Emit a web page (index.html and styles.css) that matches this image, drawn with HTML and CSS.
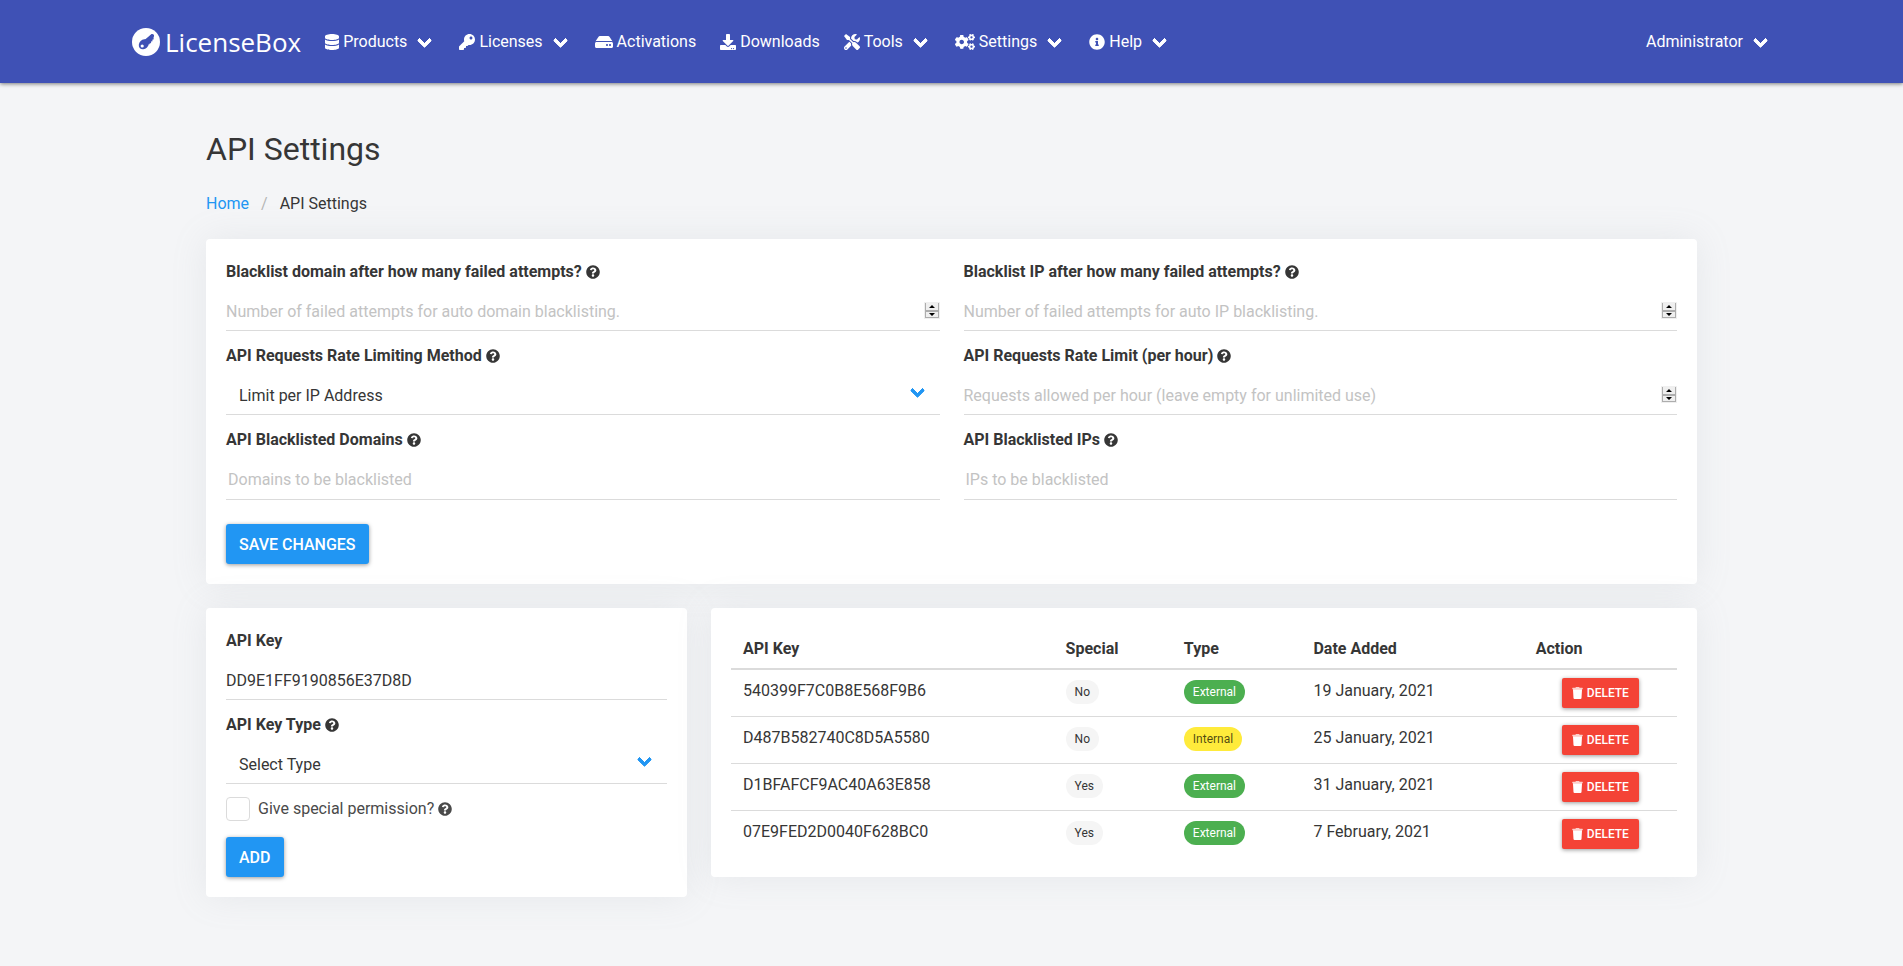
FILE: index.html
```html
<!DOCTYPE html>
<html lang="en">
<head>
<meta charset="utf-8">
<title>API Settings - LicenseBox</title>
<link rel="stylesheet" href="styles.css">
</head>
<body>
<svg class="sprite" aria-hidden="true">
  <symbol id="database" viewBox="0 0 448 512"><path d="M448 73.143v45.714C448 159.143 347.667 192 224 192S0 159.143 0 118.857V73.143C0 32.857 100.333 0 224 0s224 32.857 224 73.143zM448 176v102.857C448 319.143 347.667 352 224 352S0 319.143 0 278.857V176c48.125 33.143 136.208 48.572 224 48.572S399.874 209.143 448 176zm0 160v102.857C448 479.143 347.667 512 224 512S0 479.143 0 438.857V336c48.125 33.143 136.208 48.572 224 48.572S399.874 369.143 448 336z"/></symbol>
  <symbol id="key" viewBox="0 0 512 512"><path d="M512 176.001C512 273.203 433.202 352 336 352c-11.22 0-22.19-1.062-32.827-3.069l-24.012 27.014A23.999 23.999 0 0 1 261.223 384H224v40c0 13.255-10.745 24-24 24h-40v40c0 13.255-10.745 24-24 24H24c-13.255 0-24-10.745-24-24v-78.059c0-6.365 2.529-12.47 7.029-16.971l161.802-161.802C163.108 213.814 160 195.271 160 176 160 78.798 238.797.001 335.999 0 433.488-.001 512 78.511 512 176.001zM336 128c0 26.51 21.49 48 48 48s48-21.49 48-48-21.49-48-48-48-48 21.49-48 48z"/></symbol>
  <symbol id="hdd" viewBox="0 0 576 512"><path d="M576 304v96c0 26.51-21.49 48-48 48H48c-26.51 0-48-21.49-48-48v-96c0-26.51 21.49-48 48-48h480c26.51 0 48 21.49 48 48zm-48-80a79.557 79.557 0 0 1 30.777 6.165L462.25 85.374A48.003 48.003 0 0 0 422.311 64H153.689a48 48 0 0 0-39.938 21.374L17.223 230.165A79.557 79.557 0 0 1 48 224h480zm-48 96c-17.673 0-32 14.327-32 32s14.327 32 32 32 32-14.327 32-32-14.327-32-32-32zm-96 0c-17.673 0-32 14.327-32 32s14.327 32 32 32 32-14.327 32-32-14.327-32-32-32z"/></symbol>
  <symbol id="download" viewBox="0 0 512 512"><path d="M216 0h80c13.3 0 24 10.7 24 24v168h87.7c17.8 0 26.7 21.5 14.1 34.1L269.7 378.3c-7.5 7.5-19.8 7.5-27.3 0L90.1 226.1c-12.6-12.6-3.7-34.1 14.1-34.1H192V24c0-13.3 10.7-24 24-24zm296 376v112c0 13.3-10.7 24-24 24H24c-13.3 0-24-10.7-24-24V376c0-13.3 10.7-24 24-24h146.7l49 49c20.1 20.1 52.5 20.1 72.6 0l49-49H488c13.3 0 24 10.7 24 24zm-124 88c0-11-9-20-20-20s-20 9-20 20 9 20 20 20 20-9 20-20zm64 0c0-11-9-20-20-20s-20 9-20 20 9 20 20 20 20-9 20-20z"/></symbol>
  <symbol id="tools" viewBox="0 0 512 512"><path d="M501.1 395.7L384 278.6c-23.1-23.1-57.6-27.6-85.4-13.9L192 158.1V96L64 0 0 64l96 128h62.1l106.6 106.6c-13.6 27.8-9.2 62.3 13.9 85.4l117.1 117.1c14.6 14.6 38.2 14.6 52.7 0l52.7-52.7c14.5-14.6 14.5-38.2 0-52.7zM331.7 225c28.3 0 54.9 11 74.9 31l19.4 19.4c15.8-6.9 30.8-16.5 43.8-29.5 37.1-37.1 49.7-89.3 37.9-136.7-2.2-9-13.5-12.1-20.1-5.5l-74.4 74.4-67.9-11.3L334 98.9l74.4-74.4c6.6-6.6 3.4-17.9-5.7-20.2-47.4-11.7-99.6.9-136.6 37.9-28.5 28.5-41.9 66.1-41.2 103.6l82.1 82.1c8.1-1.9 16.5-2.9 24.7-2.9zm-103.9 82l-56.7-56.7L18.7 402.8c-25 25-25 65.5 0 90.5s65.5 25 90.5 0l123.6-123.6c-7.6-19.9-9.9-41.6-5-62.7zM64 472c-13.2 0-24-10.8-24-24 0-13.3 10.7-24 24-24s24 10.7 24 24c0 13.2-10.7 24-24 24z"/></symbol>
  <symbol id="cogs" viewBox="0 0 640 512">
    <path id="cog-small" d="M512.1 191l-8.2 14.3c-3 5.3-9.4 7.5-15.1 5.4-11.8-4.4-22.6-10.7-32.1-18.6-4.6-3.8-5.8-10.5-2.8-15.7l8.2-14.3c-6.9-8-12.3-17.3-15.9-27.4h-16.5c-6 0-11.2-4.3-12.2-10.3-2-12-2.1-24.6 0-37.1 1-6 6.2-10.4 12.2-10.4h16.5c3.6-10.1 9-19.4 15.9-27.4l-8.2-14.3c-3-5.2-1.9-11.9 2.8-15.7 9.5-7.9 20.4-14.2 32.1-18.6 5.7-2.1 12.1.1 15.1 5.4l8.2 14.3c10.5-1.9 21.2-1.9 31.7 0L552 6.3c3-5.3 9.4-7.5 15.1-5.4 11.8 4.4 22.6 10.7 32.1 18.6 4.6 3.8 5.8 10.5 2.8 15.7l-8.2 14.3c6.9 8 12.3 17.3 15.9 27.4h16.5c6 0 11.2 4.3 12.2 10.3 2 12 2.1 24.6 0 37.1-1 6-6.2 10.4-12.2 10.4h-16.5c-3.6 10.1-9 19.4-15.9 27.4l8.2 14.3c3 5.2 1.9 11.9-2.8 15.7-9.5 7.9-20.4 14.2-32.1 18.6-5.7 2.1-12.1-.1-15.1-5.4l-8.2-14.3c-10.4 1.9-21.2 1.9-31.7 0zm-10.5-58.8c38.5 29.6 82.4-14.3 52.8-52.8-38.5-29.7-82.4 14.3-52.8 52.8z"/>
    <use href="#cog-small" y="299"/>
    <path d="M386.3 286.1l33.7 16.8c10.1 5.8 14.5 18.1 10.5 29.1-8.9 24.2-26.4 46.4-42.6 65.8-7.4 8.9-20.2 11.1-30.3 5.3l-29.1-16.8c-16 13.7-34.6 24.6-54.9 31.7v33.6c0 11.6-8.3 21.6-19.7 23.6-24.6 4.2-50.4 4.4-75.9 0-11.5-2-20-11.9-20-23.6V418c-20.3-7.2-38.9-18-54.9-31.7L74 403c-10 5.8-22.9 3.6-30.3-5.3-16.2-19.4-33.3-41.6-42.2-65.7-4-10.9.4-23.2 10.5-29.1l33.3-16.8c-3.9-20.9-3.9-42.4 0-63.4L12 205.8c-10.1-5.8-14.6-18.1-10.5-29 8.9-24.2 26-46.4 42.2-65.8 7.4-8.9 20.2-11.1 30.3-5.3l29.1 16.8c16-13.7 34.6-24.6 54.9-31.7V57.1c0-11.5 8.2-21.5 19.6-23.5 24.6-4.2 50.5-4.4 76-.1 11.5 2 20 11.9 20 23.6v33.6c20.3 7.2 38.9 18 54.9 31.7l29.1-16.8c10-5.8 22.9-3.6 30.3 5.3 16.2 19.4 33.2 41.6 42.1 65.8 4 10.9.1 23.2-10 29.1l-33.7 16.8c3.9 21 3.9 42.5 0 63.5zm-117.6 21.1c59.2-77-28.7-164.9-105.7-105.7-59.2 77 28.7 164.9 105.7 105.7z"/>
  </symbol>
  <symbol id="info" viewBox="0 0 512 512"><path d="M256 8C119.043 8 8 119.083 8 256c0 136.997 111.043 248 248 248s248-111.003 248-248C504 119.083 392.957 8 256 8zm0 110c23.196 0 42 18.804 42 42s-18.804 42-42 42-42-18.804-42-42 18.804-42 42-42zm56 254c0 6.627-5.373 12-12 12h-88c-6.627 0-12-5.373-12-12v-24c0-6.627 5.373-12 12-12h12v-64h-12c-6.627 0-12-5.373-12-12v-24c0-6.627 5.373-12 12-12h64c6.627 0 12 5.373 12 12v100h12c6.627 0 12 5.373 12 12v24z"/></symbol>
  <symbol id="question" viewBox="0 0 512 512"><path d="M504 256c0 136.997-111.043 248-248 248S8 392.997 8 256C8 119.083 119.043 8 256 8s248 111.083 248 248zM262.655 90c-54.497 0-89.255 22.957-116.549 63.758-3.536 5.286-2.353 12.415 2.715 16.258l34.699 26.31c5.205 3.947 12.621 3.008 16.665-2.122 17.864-22.658 30.113-35.797 57.303-35.797 20.429 0 45.698 13.148 45.698 32.958 0 14.976-12.363 22.667-32.534 33.976C247.128 238.528 216 254.941 216 296v4c0 6.627 5.373 12 12 12h56c6.627 0 12-5.373 12-12v-1.333c0-28.462 83.186-29.647 83.186-106.667 0-58.002-60.165-102-116.531-102zM256 338c-25.365 0-46 20.635-46 46 0 25.364 20.635 46 46 46s46-20.636 46-46c0-25.365-20.635-46-46-46z"/></symbol>
  <symbol id="trash" viewBox="0 0 448 512"><path opacity=".75" d="M432 32H312l-9.4-18.7A24 24 0 0 0 281.1 0H166.8a23.72 23.72 0 0 0-21.4 13.3L136 32H16A16 16 0 0 0 0 48v32a16 16 0 0 0 16 16h416a16 16 0 0 0 16-16V48a16 16 0 0 0-16-16z"/><path d="M32 96h384v16l-21 355a48 48 0 0 1-48 45H101a48 48 0 0 1-48-45L32 112z"/></symbol>
</svg>

<header class="navbar">
  <nav class="navbar-inner" aria-label="Main">
    <a class="brand" href="#">
      <svg class="brand-mark" viewBox="0 0 28 28" aria-hidden="true">
        <circle cx="14" cy="14" r="14" fill="#fff"/>
        <path fill="none" stroke="#3f51b5" stroke-width="3" stroke-linecap="round" stroke-linejoin="round" d="M13.500 14.500L20.500 7.500"/>
        <path fill="#3f51b5" d="M12.500 12L19.500 6l2.500 1.500-.5 2.500.3 1.200-1.500.5.2 1.500-1.500.4.1 1.500-1.400.5-.7 1.200z"/>
        <ellipse cx="11.800" cy="16.300" rx="5.500" ry="4.500" transform="rotate(-45 11.800 16.300)" fill="#3f51b5"/>
        <circle cx="10.200" cy="18" r="1.600" fill="#fff"/>
      </svg>
      <span>LicenseBox</span>
    </a>
    <a class="nav-item has-arrow" href="#"><svg class="icon w14"><use href="#database"/></svg>Products</a>
    <a class="nav-item has-arrow" href="#"><svg class="icon w16"><use href="#key"/></svg>Licenses</a>
    <a class="nav-item" href="#"><svg class="icon w18"><use href="#hdd"/></svg>Activations</a>
    <a class="nav-item" href="#"><svg class="icon w16"><use href="#download"/></svg>Downloads</a>
    <a class="nav-item has-arrow" href="#"><svg class="icon w16"><use href="#tools"/></svg>Tools</a>
    <a class="nav-item has-arrow" href="#"><svg class="icon w20"><use href="#cogs"/></svg>Settings</a>
    <a class="nav-item has-arrow" href="#"><svg class="icon w16"><use href="#info"/></svg>Help</a>
    <a class="nav-item has-arrow nav-end" href="#">Administrator</a>
  </nav>
</header>

<main class="page">
  <h1 class="title">API Settings</h1>
  <nav class="breadcrumb" aria-label="Breadcrumb">
    <a href="#">Home</a><span class="slash">/</span><span>API Settings</span>
  </nav>

  <form class="card settings">
    <div class="field">
      <label class="label" for="fail-domain">Blacklist domain after how many failed attempts? <svg class="help"><use href="#question"/></svg></label>
      <input class="input" id="fail-domain" type="number" placeholder="Number of failed attempts for auto domain blacklisting.">
    </div>
    <div class="field">
      <label class="label" for="fail-ip">Blacklist IP after how many failed attempts? <svg class="help"><use href="#question"/></svg></label>
      <input class="input" id="fail-ip" type="number" placeholder="Number of failed attempts for auto IP blacklisting.">
    </div>
    <div class="field">
      <label class="label" for="method">API Requests Rate Limiting Method <svg class="help"><use href="#question"/></svg></label>
      <div class="select"><select id="method"><option>Limit per IP Address</option><option>Limit per API Key</option></select></div>
    </div>
    <div class="field">
      <label class="label" for="limit">API Requests Rate Limit (per hour) <svg class="help"><use href="#question"/></svg></label>
      <input class="input" id="limit" type="number" placeholder="Requests allowed per hour (leave empty for unlimited use)">
    </div>
    <div class="field">
      <label class="label" for="domains">API Blacklisted Domains <svg class="help"><use href="#question"/></svg></label>
      <input class="input tags-input" id="domains" type="text" placeholder="Domains to be blacklisted">
    </div>
    <div class="field">
      <label class="label" for="ips">API Blacklisted IPs <svg class="help"><use href="#question"/></svg></label>
      <input class="input tags-input" id="ips" type="text" placeholder="IPs to be blacklisted">
    </div>
    <div class="actions"><button class="button" type="button">SAVE CHANGES</button></div>
  </form>

  <div class="columns">
    <form class="card key-form">
      <div class="field">
        <label class="label" for="key-value">API Key</label>
        <input class="input" id="key-value" type="text" value="DD9E1FF9190856E37D8D">
      </div>
      <div class="field">
        <label class="label" for="key-type">API Key Type <svg class="help"><use href="#question"/></svg></label>
        <div class="select"><select id="key-type"><option>Select Type</option><option>External</option><option>Internal</option></select></div>
      </div>
      <label class="check"><input type="checkbox"><span>Give special permission? <svg class="help"><use href="#question"/></svg></span></label>
      <button class="button" type="button">ADD</button>
    </form>

    <section class="card key-list">
      <table class="table">
        <colgroup><col class="c-key"><col class="c-special"><col class="c-type"><col class="c-date"><col class="c-action"></colgroup>
        <thead>
          <tr><th>API Key</th><th>Special</th><th>Type</th><th>Date Added</th><th>Action</th></tr>
        </thead>
        <tbody>
          <tr><td>540399F7C0B8E568F9B6</td><td><span class="tag">No</span></td><td><span class="tag green">External</span></td><td>19 January, 2021</td><td class="center"><button class="delete" type="button"><svg><use href="#trash"/></svg>DELETE</button></td></tr>
          <tr><td>D487B582740C8D5A5580</td><td><span class="tag">No</span></td><td><span class="tag yellow">Internal</span></td><td>25 January, 2021</td><td class="center"><button class="delete" type="button"><svg><use href="#trash"/></svg>DELETE</button></td></tr>
          <tr><td>D1BFAFCF9AC40A63E858</td><td><span class="tag">Yes</span></td><td><span class="tag green">External</span></td><td>31 January, 2021</td><td class="center"><button class="delete" type="button"><svg><use href="#trash"/></svg>DELETE</button></td></tr>
          <tr><td>07E9FED2D0040F628BC0</td><td><span class="tag">Yes</span></td><td><span class="tag green">External</span></td><td>7 February, 2021</td><td class="center"><button class="delete" type="button"><svg><use href="#trash"/></svg>DELETE</button></td></tr>
        </tbody>
      </table>
    </section>
  </div>
</main>
</body>
</html>
```

FILE: styles.css
```css
*, *::before, *::after { box-sizing: border-box; }

body {
  margin: 0;
  background: #f4f5f7;
  color: #363636;
  font: 400 16px/24px Roboto, "Noto Sans", sans-serif;
}

input, select, button { font: inherit; color: inherit; }
a { text-decoration: none; color: #2196f3; }
.sprite { display: none; }

/* Top bar */
.navbar {
  background: #3f51b5;
  box-shadow: 0 1px 4px rgba(0, 0, 0, .5);
}
.navbar-inner {
  display: flex;
  align-items: stretch;
  max-width: 1663px;
  height: 83px;
  margin: 0 auto;
}
.brand {
  display: flex;
  align-items: center;
  gap: 5px;
  padding: 0 12px;
  color: #fff;
  font: 400 26px/32px "Open Sans", sans-serif;
}
.brand-mark { width: 28px; height: 28px; }
.nav-item {
  position: relative;
  display: flex;
  align-items: center;
  gap: 4px;
  padding: 0 12px;
  color: #fff;
}
.has-arrow { padding-right: 40px; }
.nav-end { margin-left: auto; }
.icon { height: 16px; fill: currentColor; }
.w14 { width: 14px; }
.w16 { width: 16px; }
.w18 { width: 18px; }
.w20 { width: 20px; }

.has-arrow::after, .select::after {
  content: "";
  position: absolute;
  top: 50%;
  right: 17px;
  width: 11px;
  height: 11px;
  margin-top: -7px;
  border: solid #fff;
  border-width: 0 0 4px 4px;
  border-radius: 2px;
  transform: rotate(-45deg);
  pointer-events: none;
}

/* Page */
.page {
  max-width: 1539px;
  margin: 0 auto;
  padding: 48px 24px;
}
.title {
  margin: 0 0 24px;
  font-size: 32px;
  line-height: 36px;
  font-weight: 400;
}
.breadcrumb { display: flex; margin-bottom: 22px; line-height: 26px; }
.slash { padding: 0 12px; color: #b5b5b5; }
.card {
  padding: 20px;
  background: #fff;
  border-radius: 4px;
  box-shadow: 0 0 35px rgba(154, 161, 171, .15);
}
.settings {
  display: grid;
  grid-template-columns: 1fr 1fr;
  gap: 12px 24px;
  margin-bottom: 24px;
}
.actions { grid-column: 1 / -1; padding-top: 12px; }

/* Form controls */
.label { display: block; margin-bottom: 6px; line-height: 26px; font-weight: 700; }
.help { width: 14px; height: 14px; vertical-align: -2px; fill: currentColor; }
.input {
  display: block;
  width: 100%;
  height: 40px;
  padding: 2px 0 0;
  border: 0;
  border-bottom: 1px solid #dbdbdb;
  background: transparent;
  outline: 0;
}
.input::placeholder { color: #c3c3c3; opacity: 1; }
.input::-webkit-inner-spin-button {
  width: 16px;
  height: 17px;
  margin: 0;
  opacity: 1;
  appearance: none;
  background: url("data:image/svg+xml,%3Csvg xmlns='http://www.w3.org/2000/svg' width='16' height='17'%3E%3Cpath fill='%23efefef' d='M0 0h16v17H0z'/%3E%3Cpath fill='%23adadad' d='M1 1h1v15H1zM14 1h1v15h-1zM1 8h14v2H1zM1 15h14v1H1z'/%3E%3Cpath d='M5 6l3-3 3 3zM5 11h6l-3 3z'/%3E%3C/svg%3E") center no-repeat;
}
.tags-input { height: 41px; padding: 0 2px; }
.select { position: relative; }
.select::after { margin-top: -10px; border-color: #2196f3; }
.select select {
  display: block;
  width: 100%;
  height: 40px;
  padding: 2px 40px 0 13px;
  border: 0;
  border-bottom: 1px solid #dbdbdb;
  border-radius: 0;
  background: transparent;
  appearance: none;
  outline: 0;
}
.button {
  display: block;
  height: 40px;
  padding: 2px 13px 0;
  border: 0;
  border-radius: 3px;
  background: #2196f3;
  color: #fff;
  font-weight: 500;
  box-shadow: 0 1px 4px rgba(0, 0, 0, .4);
}
.check {
  display: flex;
  align-items: center;
  gap: 8px;
  margin-bottom: 3px;
  color: #4a4a4a;
  line-height: 26px;
}
.check input {
  width: 24px;
  height: 24px;
  margin: 0;
  border: 1px solid #dbdbdb;
  border-radius: 4px;
  background: #fff;
  appearance: none;
}

/* Lower row */
.columns {
  display: grid;
  grid-template-columns: repeat(12, 1fr);
  gap: 24px;
  align-items: start;
}
.key-form { grid-column: span 4; display: grid; gap: 12px; }
.key-form .button { justify-self: start; }
.key-list { grid-column: span 8; }

.table { width: 100%; border-collapse: separate; border-spacing: 0; table-layout: fixed; }
.c-key { width: 34.1%; }
.c-special { width: 12.5%; }
.c-type { width: 13.7%; }
.c-date { width: 23.5%; }
.c-action { width: 16.2%; }
.table th {
  padding: 8px 12px 6px;
  border-bottom: 2px solid #dbdbdb;
  line-height: 26px;
  text-align: left;
  font-weight: 700;
}
.table td {
  height: 47px;
  padding: 8px 12px;
  border-bottom: 1px solid #dbdbdb;
  line-height: 26px;
  vertical-align: top;
}
.table tr:last-child td { height: 46px; border-bottom: 0; }
.table td.center { padding: 8px 0; text-align: center; }
.tag {
  display: block;
  width: fit-content;
  margin-top: 2px;
  padding: 0 9px;
  border-radius: 12px;
  background: #f5f5f5;
  font-size: 12px;
  line-height: 24px;
}
.green { background: #4caf50; color: #fff; }
.yellow { background: #ffeb3b; color: rgba(0, 0, 0, .7); }
.delete {
  display: inline-flex;
  align-items: center;
  gap: 4px;
  height: 30px;
  padding: 0 10px;
  border: 0;
  border-radius: 2px;
  background: #f44336;
  color: #fff;
  font-size: 12px;
  font-weight: 500;
  vertical-align: top;
  box-shadow: 0 1px 4px rgba(0, 0, 0, .4);
}
.delete svg { width: 11px; height: 12px; fill: currentColor; }
```
